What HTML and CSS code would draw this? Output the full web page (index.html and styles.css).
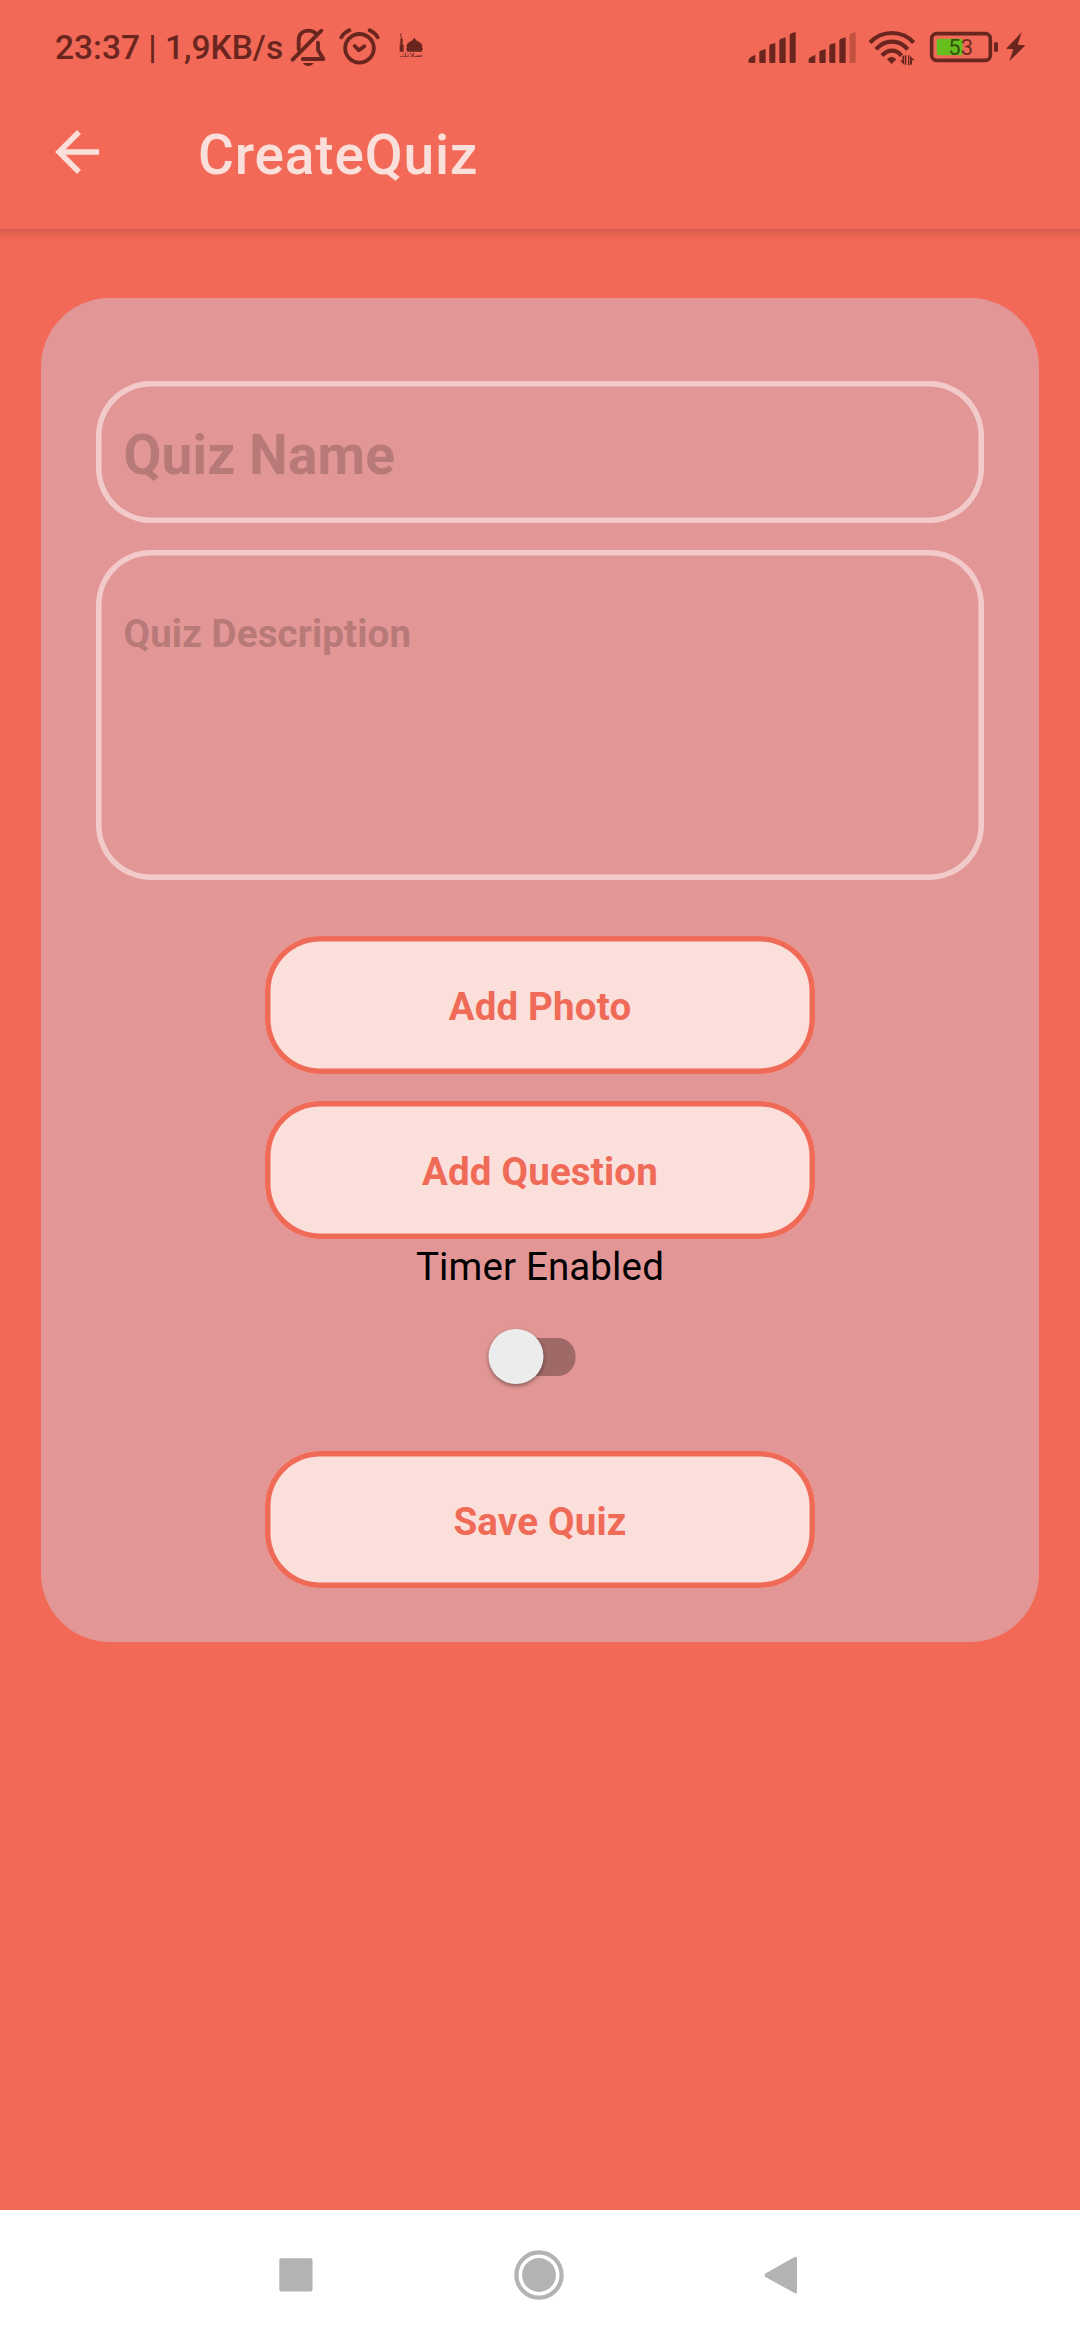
FILE: index.html
```html
<!DOCTYPE html>
<html lang="en">
<head>
<meta charset="utf-8">
<title>CreateQuiz</title>
<link rel="stylesheet" href="styles.css">
</head>
<body>
<div class="screen">
  <div class="status">
    <span class="clock">23:37 | 1,9KB/s</span>
    <svg class="bell" width="36" height="39" viewBox="60 51 108 117" fill="none" stroke="currentColor" stroke-width="11.500" stroke-linecap="round" stroke-linejoin="round">
      <path d="M86 118V92C86 72 98 62 116 62C126 62 132 65 138 71M144 98V120L160 147H98"/>
      <path d="M68 149L154 62"/>
      <path d="M99 159H131Q126 168 115 168Q104 168 99 159Z" fill="currentColor" stroke="none"/>
    </svg>
    <svg class="alarm" width="41" height="39" viewBox="207 51 123 117" fill="none" stroke="currentColor" stroke-width="11.500" stroke-linecap="round" stroke-linejoin="round">
      <circle cx="268.500" cy="115" r="43"/>
      <path d="M254 108L267 121L283 109"/>
      <path d="M214 82Q222 68 238 61M299 61Q315 68 323 82"/>
    </svg>
    <svg class="mosque" width="26" height="39" viewBox="384 51 78 117" fill="currentColor">
      <path d="M389 125V104H391V88L394 82L398 88V104H401V125Z"/>
      <path d="M399 71A6 6 0 1 0 401 79A5 5 0 1 1 399 71Z"/>
      <path d="M411 125V119H408V115H411Q407 104 415 98Q429 93 433 82Q437 93 451 98Q459 104 456 115H459V119H456V125Z"/>
      <text class="mosque-label" x="423" y="141" text-anchor="middle" textLength="70" lengthAdjust="spacingAndGlyphs">صلاتك</text>
    </svg>
    <span class="spacer"></span>
    <svg class="signal" width="49" height="39" viewBox="54 51 147 117" fill="currentColor">
      <path d="M55 154Q55 147 61 142L76 134V159H60Q55 159 55 154ZM88 125L91 122L107 117V159H91Q88 159 88 156ZM118 107L121 103L136 99V159H121Q118 159 118 156ZM148 91L151 87L167 82V159H151Q148 159 148 156ZM179 74L182 71L195 66Q197 66 197 68V156Q197 159 194 159H182Q179 159 179 156Z"/>
    </svg>
    <svg class="signal signal-two" width="50" height="39" viewBox="231 51 150 117" fill="currentColor">
      <path d="M235 154Q235 147 241 142L256 134V159H240Q235 159 235 154ZM268 125L271 122L287 117V159H271Q268 159 268 156ZM298 107L301 103L316 99V159H301Q298 159 298 156ZM328 91L331 87L347 82V159H331Q328 159 328 156Z"/>
      <path opacity=".35" d="M359 74L362 71L375 66Q377 66 377 68V156Q377 159 374 159H362Q359 159 359 156Z"/>
    </svg>
    <svg class="wifi" width="47" height="39" viewBox="414 51 141 117" fill="none" stroke="currentColor" stroke-width="12.500">
      <path d="M420 98Q446 69 486 69Q526 69 551 98"/>
      <path d="M438 118Q458 95 486 95Q514 95 533 118"/>
      <path d="M456 137Q469 122 486 122Q503 122 514 137"/>
      <path d="M471 148Q485 133 499 148L485 162Z" fill="currentColor" stroke="none"/>
      <path d="M523 136V166L510 151H517V139ZM525 136H529V164H525ZM534 136H538V166H534ZM540 137L553 151H546V164H540Z" fill="currentColor" stroke="none"/>
    </svg>
    <svg class="battery" width="70" height="39" viewBox="597 51 210 117">
      <rect x="620" y="86" width="78" height="50" rx="7" fill="#67be1f"/>
      <rect x="605" y="71" width="176" height="80" rx="15" fill="none" stroke="currentColor" stroke-width="11"/>
      <rect x="792" y="96" width="12" height="30" rx="5" fill="currentColor"/>
      <text class="battery-label" x="692" y="135" text-anchor="middle"><tspan fill="#35530e">5</tspan><tspan fill="#70291f">3</tspan></text>
    </svg>
    <svg class="bolt" width="21" height="39" viewBox="825 51 63 117" fill="currentColor">
      <path d="M875 67L828 116L850 118L838 154L886 106L863 104Z"/>
    </svg>
  </div>

  <div class="header">
    <svg class="back" width="44" height="44" viewBox="0 0 44 44" fill="none" stroke="currentColor" stroke-width="5.500">
      <path d="M24 2L4 22L24 42M4 22H44"/>
    </svg>
    <h1 class="title">CreateQuiz</h1>
  </div>

  <div class="content">
    <div class="card">
      <div class="field name">Quiz Name</div>
      <div class="field description">Quiz Description</div>
      <div class="button">Add Photo</div>
      <div class="button">Add Question</div>
      <div class="timer">Timer Enabled</div>
      <div class="switch"><div class="thumb"></div></div>
      <div class="button">Save Quiz</div>
    </div>
  </div>

  <div class="nav">
    <svg width="34" height="50" viewBox="0 0 34 50"><rect x=".3" y="8.300" width="33.200" height="33.200" rx="2"/></svg>
    <svg width="50" height="50" viewBox="0 0 50 50"><circle cx="25" cy="25" r="22.600" fill="none" stroke="#b3b3b3" stroke-width="4.200"/><circle cx="25" cy="25" r="16.900"/></svg>
    <svg width="34" height="50" viewBox="0 0 34 50"><path d="M1.400 23.500L30.500 7Q33 6 33 8.500V41.500Q33 44.500 30.500 43L1.400 27Q-.2 25.500 1.400 23.500Z"/></svg>
  </div>
</div>
</body>
</html>
```

FILE: styles.css
```css
* {
  box-sizing: border-box;
}

body {
  margin: 0;
  font-family: Roboto, sans-serif;
}

.screen {
  display: flex;
  flex-direction: column;
  width: 1080px;
  height: 2340px;
  background: #f26957;
  overflow: hidden;
}

.status {
  display: flex;
  flex: none;
  height: 92px;
  padding: 27px 54px 0 55px;
  color: #6a261e;
}

.clock {
  width: 235px;
  font-size: 33.5px;
  font-weight: 500;
  line-height: 42px;
  white-space: nowrap;
}

.status svg {
  flex: none;
}

.alarm {
  margin-left: 13px;
}

.mosque {
  margin-left: 18px;
}

.mosque-label {
  font-family: "DejaVu Sans", sans-serif;
  font-size: 18px;
}

.spacer {
  flex: 1;
}

.signal-two {
  margin-left: 10px;
}

.wifi {
  margin-left: 11px;
}

.battery {
  margin-left: 14px;
}

.battery-label {
  font-size: 66px;
}

.bolt {
  margin-left: 6px;
}

.header {
  display: flex;
  flex: none;
  height: 137px;
  padding-left: 55px;
  color: #fbdfdb;
}

.back {
  flex: none;
  margin-top: 38px;
}

.title {
  margin: 31px 0 0 99px;
  font-size: 55px;
  font-weight: 500;
  letter-spacing: 0.85px;
  line-height: 64px;
}

.content {
  flex: 1;
  padding: 69.4px 41.25px 0;
  background: linear-gradient(rgba(0, 0, 0, 0.14), rgba(0, 0, 0, 0.05) 5px, transparent 12px);
}

.card {
  display: flex;
  flex-direction: column;
  align-items: center;
  height: 1344px;
  padding: 82.5px 54.75px 0;
  border-radius: 68.75px;
  background: #e29796;
}

.field {
  width: 100%;
  padding-left: 27.5px;
  border-radius: 55px;
  box-shadow: inset 0 0 0 5.5px #f2cac9;
  color: #b87979;
  font-weight: 700;
  letter-spacing: 0.13px;
}

.name {
  height: 141.8px;
  padding-top: 42px;
  font-size: 55px;
  line-height: 64px;
}

.description {
  height: 330px;
  margin: 27.3px 0 56px;
  padding-top: 61px;
  font-size: 38.5px;
  line-height: 46px;
}

.button {
  flex: none;
  width: 550px;
  height: 137.7px;
  padding-top: 48px;
  border-radius: 55px;
  background: #fbdfdb;
  box-shadow: inset 0 0 0 5.5px #f06a58;
  color: #f06a58;
  font-size: 38.5px;
  font-weight: 700;
  letter-spacing: 0.17px;
  line-height: 46px;
  text-align: center;
}

.button + .button {
  margin-top: 27.3px;
}

.timer {
  margin-top: 5px;
  color: #000;
  font-size: 38.5px;
  letter-spacing: 0.13px;
  line-height: 46px;
}

.switch {
  width: 75px;
  height: 38px;
  margin: 48px 0 75px;
  border-radius: 18px;
  background: #9e6967;
  transform: translateX(-2.5px);
}

.thumb {
  width: 55px;
  height: 55px;
  margin: -8.5px 0 0 -12px;
  border-radius: 50%;
  background: #ececec;
  box-shadow: 0 2px 4px rgba(0, 0, 0, 0.4);
}

.nav {
  display: flex;
  flex: none;
  justify-content: space-between;
  height: 130px;
  padding: 40px 282px 0 279px;
  background: #fff;
  fill: #b3b3b3;
}
```
